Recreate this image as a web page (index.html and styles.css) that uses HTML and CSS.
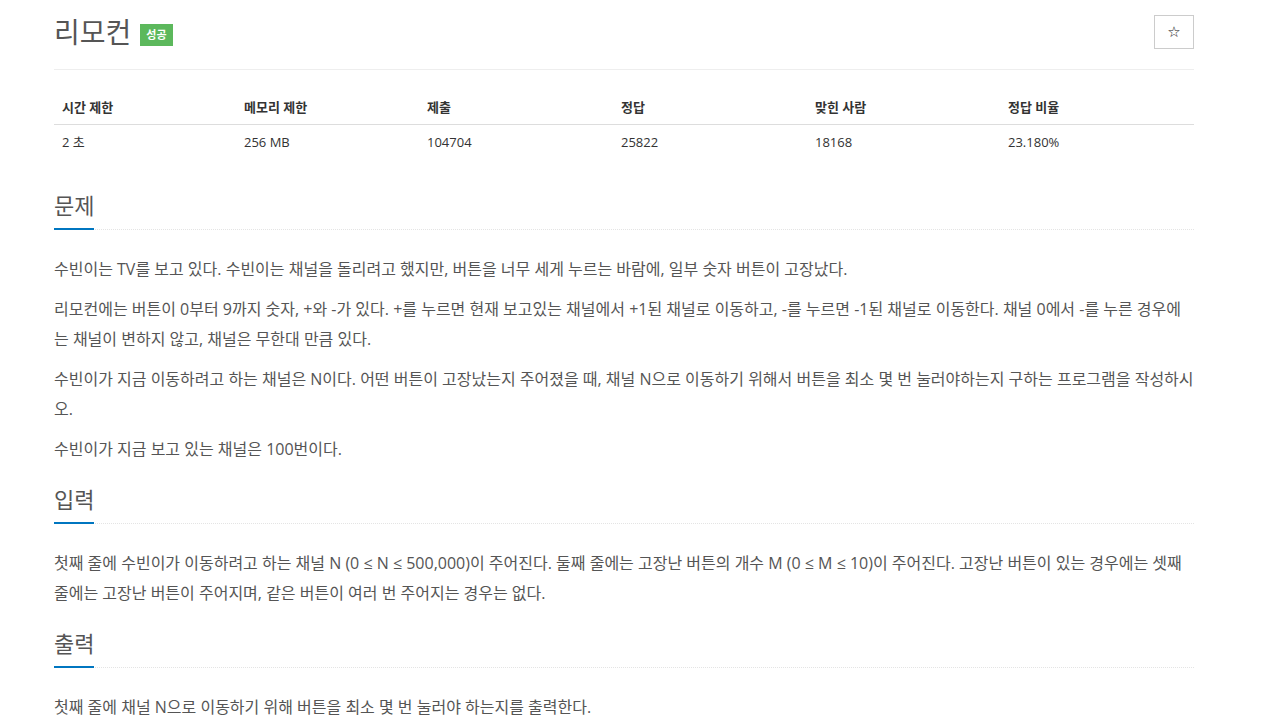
FILE: index.html
```html
<!DOCTYPE html>
<html lang="ko">
<head>
    <meta charset="UTF-8">
    <meta name="viewport" content="width=device-width, initial-scale=1.0">
    <title>리모컨</title>
    <link rel="stylesheet" href="styles.css">
</head>
<body>
    <div class="container">
        <div class="page-header">
            <h1 class="problem-title">리모컨 <span class="label-success">성공</span></h1>
            <button class="star-btn" type="button">☆</button>
        </div>

        <table class="problem-info">
            <thead>
                <tr>
                    <th class="col-time">시간 제한</th>
                    <th class="col-mem">메모리 제한</th>
                    <th class="col-submit">제출</th>
                    <th class="col-answer">정답</th>
                    <th class="col-people">맞힌 사람</th>
                    <th class="col-ratio">정답 비율</th>
                </tr>
            </thead>
            <tbody>
                <tr>
                    <td>2 초</td>
                    <td>256 MB</td>
                    <td>104704</td>
                    <td>25822</td>
                    <td>18168</td>
                    <td>23.180%</td>
                </tr>
            </tbody>
        </table>

        <section class="problem-section">
            <div class="headline">
                <h2>문제</h2>
            </div>
            <div class="problem-text">
                <p>수빈이는 TV를 보고 있다. 수빈이는 채널을 돌리려고 했지만, 버튼을 너무 세게 누르는 바람에, 일부 숫자 버튼이 고장났다.</p>
                <p>리모컨에는 버튼이 0부터 9까지 숫자, +와 -가 있다. +를 누르면 현재 보고있는 채널에서 +1된 채널로 이동하고, -를 누르면 -1된 채널로 이동한다. 채널 0에서 -를 누른 경우에는 채널이 변하지 않고, 채널은 무한대 만큼 있다.</p>
                <p>수빈이가 지금 이동하려고 하는 채널은 N이다. 어떤 버튼이 고장났는지 주어졌을 때, 채널 N으로 이동하기 위해서 버튼을 최소 몇 번 눌러야하는지 구하는 프로그램을 작성하시오.</p>
                <p>수빈이가 지금 보고 있는 채널은 100번이다.</p>
            </div>
        </section>

        <section class="problem-section">
            <div class="headline">
                <h2>입력</h2>
            </div>
            <div class="problem-text">
                <p>첫째 줄에 수빈이가 이동하려고 하는 채널 N (0 ≤ N ≤ 500,000)이 주어진다. 둘째 줄에는 고장난 버튼의 개수 M (0 ≤ M ≤ 10)이 주어진다. 고장난 버튼이 있는 경우에는 셋째 줄에는 고장난 버튼이 주어지며, 같은 버튼이 여러 번 주어지는 경우는 없다.</p>
            </div>
        </section>

        <section class="problem-section">
            <div class="headline">
                <h2>출력</h2>
            </div>
            <div class="problem-text">
                <p>첫째 줄에 채널 N으로 이동하기 위해 버튼을 최소 몇 번 눌러야 하는지를 출력한다.</p>
            </div>
        </section>
    </div>
</body>
</html>
```

FILE: styles.css
```css
body {
    font-family: 'Open Sans', 'Noto Sans CJK KR', sans-serif;
    background-color: #fff;
    color: #555;
    margin: 0;
    padding: 0;
}

.container {
    width: 1140px;
    margin: 0 0 0 54px;
}

.page-header {
    display: flex;
    justify-content: space-between;
    align-items: flex-start;
    padding: 15px 0 20px;
    border-bottom: 1px solid #eee;
}

.problem-title {
    margin: 0;
    font-size: 28px;
    font-weight: 400;
    line-height: 34px;
    color: #555;
    display: flex;
    align-items: center;
    gap: 9px;
}

.label-success {
    display: inline-block;
    background-color: #5cb85c;
    color: #fff;
    font-size: 11px;
    font-weight: 700;
    line-height: 22px;
    padding: 0 6px;
    margin-top: 6px;
}

.star-btn {
    width: 40px;
    height: 34px;
    background-color: #fff;
    border: 1px solid #ccc;
    font-family: 'DejaVu Sans', sans-serif;
    font-size: 15px;
    color: #111;
    padding: 0;
    cursor: pointer;
}

.problem-info {
    width: 100%;
    border-collapse: collapse;
    margin: 20px 0 19px;
    font-size: 13px;
    color: #333;
}

.problem-info th,
.problem-info td {
    text-align: left;
    padding: 8px;
    line-height: 18px;
}

.problem-info th {
    font-weight: 700;
    border-bottom: 1px solid #ddd;
}

.col-time { width: 166px; }
.col-mem { width: 167px; }
.col-submit { width: 178px; }
.col-answer { width: 178px; }
.col-people { width: 177px; }

.problem-section {
    margin-top: 20px;
}

.problem-info + .problem-section {
    margin-top: 31px;
}

.headline {
    border-bottom: 1px dotted #e4e4e4;
    margin-bottom: 24px;
}

.headline h2 {
    display: inline-block;
    margin: 0 0 -1px;
    padding: 0 0 8px;
    font-size: 22px;
    font-weight: 400;
    line-height: 30px;
    color: #555;
    border-bottom: 2px solid #0076c0;
    min-width: 40px;
}

.problem-text {
    font-size: 16px;
    line-height: 30px;
    color: #555;
}

.problem-text p {
    margin: 0 0 10px;
}
```
